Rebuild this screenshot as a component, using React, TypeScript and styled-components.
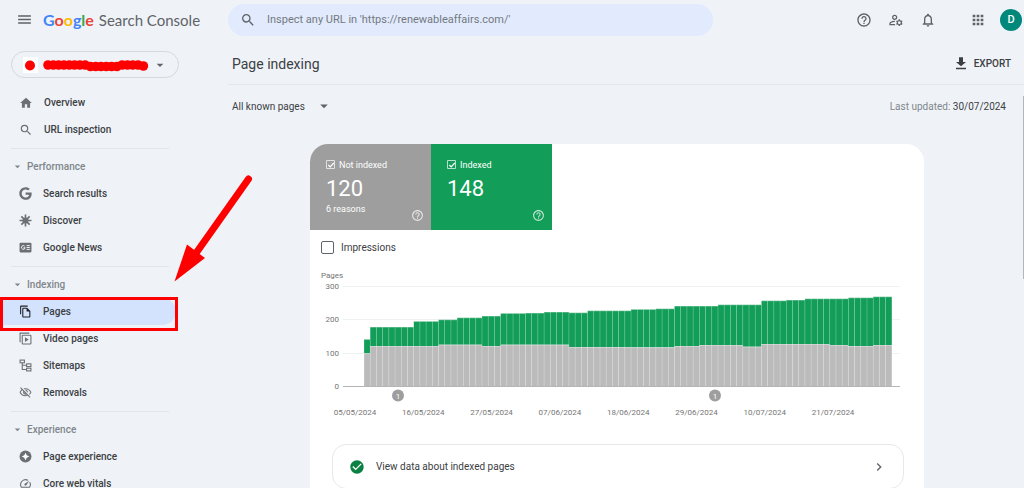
import React from "react";
import styled, { createGlobalStyle } from "styled-components";
import {
  MdHome,
  MdSearch,
  MdMenu,
  MdArrowDropDown,
  MdHelpOutline,
  MdOutlineManageAccounts,
  MdNotificationsNone,
  MdApps,
  MdOutlineFileCopy,
  MdOutlineVisibilityOff,
  MdSpeed,
  MdCheckCircle,
  MdChevronRight,
} from "react-icons/md";
import { FaGoogle } from "react-icons/fa";

const GlobalStyle = createGlobalStyle`
  *, *::before, *::after { box-sizing: border-box; }
  body {
    margin: 0;
    background: #eff3f8;
    color: #3c4043;
    font-family: Roboto, "Liberation Sans", sans-serif;
    font-size: 10px;
    overflow: hidden;
  }
  button, input, select { font: inherit; color: inherit; margin: 0; }
  button { background: none; border: 0; padding: 0; cursor: pointer; }
  a { color: inherit; text-decoration: none; }
  h1, p, ul { margin: 0; padding: 0; }
  svg { display: block; flex: none; }
`;

const Shell = styled.div`
  position: relative;
  display: flex;
  flex-direction: column;
  height: 100vh;
  overflow: hidden;
`;

const Header = styled.header`
  display: flex;
  align-items: center;
  height: 39px;
  flex: none;
  padding-right: 2px;
`;

const Brand = styled.div`
  display: flex;
  align-items: center;
  width: 228px;
  flex: none;
  padding-left: 16px;
  gap: 10px;
`;

const IconButton = styled.button`
  display: flex;
  color: #5f6368;
`;

const Logo = styled.a`
  display: flex;
  align-items: baseline;
  gap: 5px;
  font-family: Lato, Roboto, sans-serif;
  font-size: 16px;
  line-height: 20px;
  color: #5f6368;
  white-space: nowrap;
`;

const Wordmark = styled.span`
  font-weight: 700;
`;

const Product = styled.span`
  font-size: 15px;
`;

const Letter = styled.span<{ $color: string }>`
  color: ${(p) => p.$color};
`;

const SearchBar = styled.label`
  display: flex;
  align-items: center;
  flex: 0 1 485px;
  height: 32px;
  padding: 0 12px;
  gap: 11px;
  border-radius: 16px;
  background: #e1ebfd;
  color: #5f6368;
`;

const SearchInput = styled.input`
  flex: 1;
  min-width: 0;
  border: 0;
  outline: 0;
  padding: 0;
  background: transparent;
  font-size: 11px;
  &::placeholder { color: #74797f; opacity: 1; }
`;

const Actions = styled.div`
  display: flex;
  align-items: center;
  margin-left: auto;
  gap: 16px;
`;

const Account = styled.div`
  display: flex;
  align-items: center;
  gap: 14px;
  margin-left: 18px;
`;

const Avatar = styled.button`
  width: 22px;
  height: 22px;
  border-radius: 50%;
  background: #00897b;
  color: #fff;
  font-weight: 500;
  font-size: 11px;
`;

const Body = styled.div`
  display: flex;
  flex: 1;
  min-height: 0;
`;

const Sidebar = styled.nav`
  width: 228px;
  flex: none;
  padding-top: 12px;
  overflow: hidden;
  font-weight: 500;
`;

const Property = styled.button`
  display: flex;
  align-items: center;
  width: 168px;
  height: 27px;
  margin: 0 0 11px 11px;
  padding: 0 11px;
  gap: 3px;
  border: 1px solid #d5d9dd;
  border-radius: 14px;
  color: #5f6368;
`;

const NavGroup = styled.ul<{ $divided?: boolean }>`
  position: relative;
  width: 178px;
  list-style: none;
  ${(p) =>
    p.$divided &&
    `
    padding-top: 10px;
    &::before {
      content: "";
      position: absolute;
      top: 5px;
      left: 11px;
      right: 9px;
      border-top: 1px solid #e2e6ea;
    }
  `}
`;

const GroupTitle = styled.button`
  display: flex;
  align-items: center;
  height: 27px;
  padding-left: 11px;
  gap: 3px;
  color: #80868b;
`;

const NavLink = styled.a<{ $active?: boolean }>`
  display: flex;
  align-items: center;
  height: 27px;
  width: 176px;
  padding-left: 19px;
  gap: 11px;
  border-radius: 0 14px 14px 0;
  background: ${(p) => (p.$active ? "#d3e2fd" : "transparent")};
  & > svg { color: ${(p) => (p.$active ? "#202124" : "#6b7075")}; }
`;

const Main = styled.main`
  flex: 1;
  min-width: 0;
`;

const TitleBar = styled.div`
  display: flex;
  align-items: center;
  justify-content: space-between;
  height: 46px;
  padding: 4px 13px 0 4px;
  border-bottom: 1px solid #e3e7e8;
`;

const Title = styled.h1`
  font-size: 14px;
  font-weight: 400;
  line-height: 20px;
`;

const ExportButton = styled.button`
  display: flex;
  align-items: center;
  gap: 5px;
  font-weight: 500;
`;

const Content = styled.div`
  padding-right: 18px;
`;

const FilterBar = styled.div`
  display: flex;
  align-items: center;
  justify-content: space-between;
  height: 42px;
  padding-left: 4px;
`;

const SelectWrap = styled.label`
  display: grid;
  grid-template-columns: 101px;
  align-items: center;
  & > * { grid-area: 1 / 1; }
  & > svg { justify-self: end; pointer-events: none; color: #5f6368; }
`;

const Select = styled.select`
  appearance: none;
  border: 0;
  padding: 0;
  background: transparent;
`;

const Updated = styled.p`
  color: #80868b;
`;

const Strong = styled.span`
  color: #3c4043;
`;

const Card = styled.section`
  max-width: 614px;
  margin: 17px auto 0;
  border-radius: 18px;
  background: #fff;
  overflow: hidden;
`;

const Metrics = styled.div`
  display: flex;
`;

const Metric = styled.div<{ $color: string }>`
  display: flex;
  flex-direction: column;
  width: 121px;
  height: 86px;
  padding: 14px 7px 8px 16px;
  background: ${(p) => p.$color};
  color: #fff;
  font-size: 9px;
`;

const MetricLabel = styled.label`
  display: flex;
  align-items: center;
  gap: 4px;
  height: 13px;
`;

const Check = styled.input`
  appearance: none;
  width: 9px;
  height: 9px;
  border: 1px solid #ffffffb0;
  border-radius: 1px;
  background: transparent
    url("data:image/svg+xml,%3Csvg xmlns='http://www.w3.org/2000/svg' viewBox='0 0 8 8' fill='none' stroke='white' stroke-width='1.3'%3E%3Cpath d='M1.3 4l1.9 1.9L6.8 2'/%3E%3C/svg%3E")
    center / 8px no-repeat;
`;

const Figure = styled.p`
  font-size: 22px;
  line-height: 26px;
  padding-top: 5px;
`;

const MetricFoot = styled.div`
  display: flex;
  justify-content: space-between;
  flex: 1;
  line-height: 14px;
`;

const HelpButton = styled.button`
  align-self: flex-end;
  opacity: 0.75;
`;

const Impressions = styled.label`
  display: flex;
  align-items: center;
  width: max-content;
  height: 34px;
  margin-left: 11px;
  gap: 7px;
`;

const Box = styled.input`
  appearance: none;
  width: 13px;
  height: 13px;
  border: 1px solid #5f6368;
  border-radius: 2px;
  background: #fff;
`;

const Chart = styled.svg`
  width: 100%;
  height: auto;
`;

const DataLink = styled.a`
  display: flex;
  align-items: center;
  height: 45px;
  margin: 17px 20px 20px 22px;
  padding: 0 16px;
  gap: 11px;
  border: 1px solid #e6e8eb;
  border-radius: 14px;
  & > :last-child { margin-left: auto; color: #5f6368; }
`;

const ScrollThumb = styled.div`
  position: absolute;
  right: 0;
  top: 96px;
  width: 1px;
  height: 183px;
  background: #b4b6b9;
`;

const HighlightFrame = styled.div`
  position: absolute;
  z-index: 1;
  top: -1px;
  left: 0;
  right: 0;
  height: 34px;
  border: 3px solid #fe0000;
  pointer-events: none;
`;

const NavItem = styled.li`
  position: relative;
`;

const Arrow = styled.svg`
  position: absolute;
  left: 170px;
  top: 170px;
  pointer-events: none;
`;

const svgProps = { width: 13, height: 13, viewBox: "0 0 24 24" };

const DownloadIcon = () => (
  <svg width="16" height="16" viewBox="0 0 24 24" fill="currentColor">
    <path d="M19.500 9H15V2H9v7H4.500L12 15.500zM4.500 17.500v2.500h15v-2.500z" />
  </svg>
);

const DiscoverIcon = () => (
  <svg {...svgProps} fill="none" stroke="currentColor" strokeWidth="3">
    <path d="M12 1v22M1 12h22M4.300 4.300l15.400 15.400M19.700 4.300L4.300 19.700" />
    <circle cx="12" cy="12" r="4" fill="currentColor" />
  </svg>
);

const NewsIcon = () => (
  <svg {...svgProps} fill="none">
    <rect x="1" y="3" width="22" height="18" rx="2" fill="currentColor" />
    <path
      d="M10.500 9.600A3.400 3.400 0 1 0 11.300 12.500H8.300M14 8.500h6M14 12h6M14 15.500h6"
      stroke="#eff3f8"
      strokeWidth="1.800"
    />
  </svg>
);

const VideoPagesIcon = () => (
  <svg {...svgProps} fill="none" stroke="currentColor" strokeWidth="2">
    <path d="M2 19V2h17" />
    <rect x="6" y="6" width="16" height="16" rx="1" />
    <path d="M11 9.500v9l7-4.500z" fill="currentColor" stroke="none" />
  </svg>
);

const SitemapIcon = () => (
  <svg {...svgProps} fill="none" stroke="currentColor" strokeWidth="2">
    <rect x="2" y="2" width="8" height="5" />
    <rect x="14" y="9" width="8" height="5" />
    <rect x="14" y="17" width="8" height="5" />
    <path d="M6 7v12.500h8M6 11.500h8" />
  </svg>
);

const ExperienceIcon = () => (
  <svg {...svgProps}>
    <circle cx="12" cy="12" r="11" fill="currentColor" />
    <path
      d="M12 5l2.300 4.700L19 12l-4.700 2.300L12 19l-2.300-4.700L5 12l4.700-2.300z"
      fill="#fff"
    />
  </svg>
);

type Item = { label: string; icon: React.ReactNode; active?: boolean };

const groups: { title?: string; items: Item[] }[] = [
  {
    items: [
      { label: "Overview", icon: <MdHome size={14} /> },
      { label: "URL inspection", icon: <MdSearch size={14} /> },
    ].map((item) => item),
  },
  {
    title: "Performance",
    items: [
      { label: "Search results", icon: <FaGoogle size={13} /> },
      { label: "Discover", icon: <DiscoverIcon /> },
      { label: "Google News", icon: <NewsIcon /> },
    ],
  },
  {
    title: "Indexing",
    items: [
      { label: "Pages", icon: <MdOutlineFileCopy size={13} />, active: true },
      { label: "Video pages", icon: <VideoPagesIcon /> },
      { label: "Sitemaps", icon: <SitemapIcon /> },
      { label: "Removals", icon: <MdOutlineVisibilityOff size={13} /> },
    ],
  },
  {
    title: "Experience",
    items: [
      { label: "Page experience", icon: <ExperienceIcon /> },
      { label: "Core web vitals", icon: <MdSpeed size={13} /> },
    ],
  },
];

const wordmark: [string, string][] = [
  ["G", "#4285f4"],
  ["o", "#ea4335"],
  ["o", "#fbbc04"],
  ["g", "#4285f4"],
  ["l", "#34a853"],
  ["e", "#ea4335"],
];

/* Each pair is [first day it applies to, value]. */
const totals = [
  [0, 140], [1, 177], [8, 194], [12, 199], [15, 205], [19, 210], [22, 218],
  [26, 219], [29, 222], [33, 220], [36, 226], [43, 230], [47, 232], [50, 240],
  [57, 244], [64, 256], [68, 258], [71, 262], [78, 265], [82, 268],
];
const notIndexed = [
  [0, 98], [1, 120], [12, 124], [19, 120], [22, 124], [33, 117], [43, 116],
  [50, 120], [54, 123], [61, 118], [64, 126], [75, 123], [78, 120], [82, 123],
];
const DAYS = 85;
const valueAt = (steps: number[][], day: number) =>
  steps.reduce((v, [from, value]) => (day >= from ? value : v), 0);

const dates = [
  "05/05/2024", "16/05/2024", "27/05/2024", "07/06/2024",
  "18/06/2024", "29/06/2024", "10/07/2024", "21/07/2024",
];

const BASE = 122;
const y = (v: number) => BASE - v / 3;

function IndexingChart() {
  const pitch = 6.21;
  return (
    <Chart viewBox="0 0 614 163" role="img" aria-label="Indexed and not indexed pages per day">
      <g fontSize="8" fill="#757575">
        <text x="11" y="14">Pages</text>
        {[0, 100, 200, 300].map((v) => (
          <g key={v}>
            <path d={`M33 ${Math.round(y(v)) + 0.5}H590`} stroke={v ? "#f1f1f1" : "#b5b5b5"} />
            <text x="29" y={y(v) + 3} textAnchor="end">{v}</text>
          </g>
        ))}
        {dates.map((d, i) => (
          <text key={d} x={45 + i * 68.3} y="151" textAnchor="middle">{d}</text>
        ))}
      </g>
      {Array.from({ length: DAYS }, (_, i) => {
        const x = 54 + i * pitch;
        const total = valueAt(totals, i);
        const gray = valueAt(notIndexed, i);
        const split = y(gray);
        return (
          <g key={i}>
            <rect x={x} y={y(total)} width={pitch} height={split - y(total)} fill="#6fc397" />
            <rect x={x + 0.3} y={y(total) + 0.6} width={pitch - 0.6} height={split - y(total) - 0.6} fill="#129e58" />
            <rect x={x} y={split} width={pitch} height={BASE - split} fill="#d6d6d6" />
            <rect x={x + 0.3} y={split + 0.8} width={pitch - 0.6} height={BASE - split - 0.8} fill="#bbb" />
          </g>
        );
      })}
      {[88, 405].map((x) => (
        <g key={x}>
          <circle cx={x} cy="131.500" r="6" fill="#9e9e9e" />
          <text x={x} y="134.500" fontSize="8" fill="#fff" textAnchor="middle">1</text>
        </g>
      ))}
    </Chart>
  );
}

export default function App() {
  return (
    <Shell>
      <GlobalStyle />
      <Header>
        <Brand>
          <IconButton aria-label="Main menu"><MdMenu size={17} /></IconButton>
          <Logo href="#">
            <Wordmark>
              {wordmark.map(([c, color], i) => (
                <Letter key={i} $color={color}>{c}</Letter>
              ))}
            </Wordmark>
            <Product>Search Console</Product>
          </Logo>
        </Brand>
        <SearchBar>
          <MdSearch size={16} />
          <SearchInput
            aria-label="Inspect URL"
            placeholder="Inspect any URL in 'https://renewableaffairs.com/'"
          />
        </SearchBar>
        <Actions>
          <IconButton aria-label="Help"><MdHelpOutline size={16} /></IconButton>
          <IconButton aria-label="Manage users"><MdOutlineManageAccounts size={16} /></IconButton>
          <IconButton aria-label="Notifications"><MdNotificationsNone size={16} /></IconButton>
          <Account>
            <IconButton aria-label="Google apps"><MdApps size={16} /></IconButton>
            <Avatar aria-label="Account">D</Avatar>
          </Account>
        </Actions>
      </Header>
      <Body>
        <Sidebar>
          <Property aria-label="Select property">
            <svg width="126" height="16" viewBox="0 0 126 16">
              <rect width="15" height="16" fill="#fff" />
              <circle cx="7" cy="8.500" r="5" fill="#fe0000" />
              <g fill="#fe0000">
                {Array.from({ length: 19 }, (_, i) => (
                  <circle
                    key={i}
                    cx={25 + i * 5.3}
                    cy={i > 7 && i < 14 ? 9.5 : i === 18 ? 9 : 8}
                    r="4.800"
                  />
                ))}
              </g>
            </svg>
            <MdArrowDropDown size={16} />
          </Property>
          {groups.map((group, g) => (
            <NavGroup key={g} $divided={g > 0}>
              {group.title && (
                <li>
                  <GroupTitle>
                    <MdArrowDropDown size={13} />
                    {group.title}
                  </GroupTitle>
                </li>
              )}
              {group.items.map((item) => (
                <NavItem key={item.label}>
                  <NavLink href="#" $active={item.active}>
                    {item.icon}
                    {item.label}
                  </NavLink>
                  {item.active && <HighlightFrame />}
                </NavItem>
              ))}
            </NavGroup>
          ))}
        </Sidebar>
        <Main>
          <TitleBar>
            <Title>Page indexing</Title>
            <ExportButton><DownloadIcon />EXPORT</ExportButton>
          </TitleBar>
          <Content>
            <FilterBar>
              <SelectWrap>
                <Select aria-label="Pages shown">
                  <option>All known pages</option>
                </Select>
                <MdArrowDropDown size={18} />
              </SelectWrap>
              <Updated>Last updated: <Strong>30/07/2024</Strong></Updated>
            </FilterBar>
            <Card>
              <Metrics>
                <Metric $color="#9e9e9e">
                  <MetricLabel><Check type="checkbox" defaultChecked />Not indexed</MetricLabel>
                  <Figure>120</Figure>
                  <MetricFoot>
                    6 reasons
                    <HelpButton aria-label="About not indexed"><MdHelpOutline size={13} /></HelpButton>
                  </MetricFoot>
                </Metric>
                <Metric $color="#129e58">
                  <MetricLabel><Check type="checkbox" defaultChecked />Indexed</MetricLabel>
                  <Figure>148</Figure>
                  <MetricFoot>
                    <span />
                    <HelpButton aria-label="About indexed"><MdHelpOutline size={13} /></HelpButton>
                  </MetricFoot>
                </Metric>
              </Metrics>
              <Impressions><Box type="checkbox" />Impressions</Impressions>
              <IndexingChart />
              <DataLink href="#">
                <MdCheckCircle size={16} color="#0b8043" />
                View data about indexed pages
                <MdChevronRight size={16} />
              </DataLink>
            </Card>
          </Content>
        </Main>
      </Body>
      <ScrollThumb />
      <Arrow width="90" height="115" viewBox="0 0 90 115" fill="#fe0000">
        <path d="M78.500 9L24 86" stroke="#fe0000" strokeWidth="7" strokeLinecap="round" />
        <path d="M4.500 111.500L17 74.500L35 88z" />
      </Arrow>
    </Shell>
  );
}
